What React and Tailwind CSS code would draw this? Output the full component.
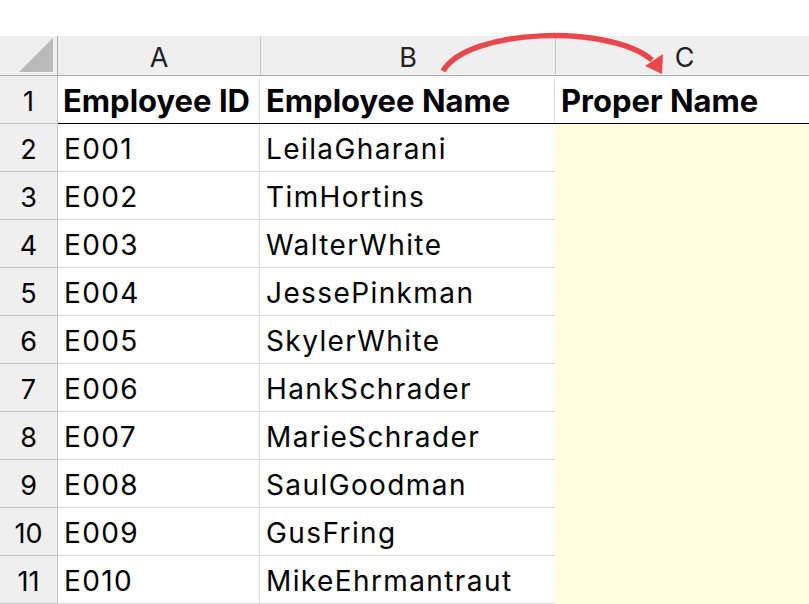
import React from "react";

const rows = [
  ["E001", "LeilaGharani"],
  ["E002", "TimHortins"],
  ["E003", "WalterWhite"],
  ["E004", "JessePinkman"],
  ["E005", "SkylerWhite"],
  ["E006", "HankSchrader"],
  ["E007", "MarieSchrader"],
  ["E008", "SaulGoodman"],
  ["E009", "GusFring"],
  ["E010", "MikeEhrmantraut"],
];

const App = () => {
  return (
    <div
      className="relative w-[809px] h-[604px] overflow-hidden bg-white text-black"
      style={{ fontFamily: "Inter, 'Noto Sans', sans-serif" }}
    >
      {/* gap above the sheet */}
      <div className="h-[36px]" />

      {/* column headers */}
      <div className="flex h-[40px] bg-[#efefef] border-b border-[#ababab] text-[27px] text-[#222]">
        <div className="w-[58px] shrink-0 border-r border-[#ababab] flex items-end justify-end pr-[4px] pb-[3px]">
          <div className="w-0 h-0 border-l-[34px] border-l-transparent border-b-[34px] border-b-[#b9b9b9]" />
        </div>
        <div className="w-[203px] shrink-0 border-r border-[#c6c6c6] flex items-center justify-center pt-[5px]">A</div>
        <div className="w-[295px] shrink-0 border-r border-[#c6c6c6] flex items-center justify-center pt-[5px]">B</div>
        <div className="flex-1 flex items-center justify-center pt-[5px] pl-[4px]">C</div>
      </div>

      {/* header row */}
      <div className="flex h-[48px]">
        <div className="w-[58px] shrink-0 bg-[#efefef] border-r border-b border-[#c6c6c6] flex items-center justify-center text-[27px] pt-[5px]">1</div>
        <div className="flex-1 flex border-b-[1.5px] border-black font-bold text-[31px] pt-[3px]">
          <div className="w-[202px] shrink-0 border-r border-[#dadada] flex items-center pl-[5px]">Employee ID</div>
          <div className="w-[295px] shrink-0 border-r border-[#dadada] flex items-center pl-[6px]">Employee Name</div>
          <div className="flex-1 flex items-center pl-[6px]">Proper Name</div>
        </div>
      </div>

      {/* data rows */}
      {rows.map(([id, name], i) => (
        <div key={id} className="flex h-[48px] text-[28px] tracking-[1.4px]">
          <div className="w-[58px] shrink-0 bg-[#efefef] border-r border-b border-[#c6c6c6] flex items-center justify-center text-[27px] tracking-normal pt-[5px]">
            {i + 2}
          </div>
          <div className="w-[202px] shrink-0 border-r border-b border-[#dadada] flex items-center pl-[6px] pt-[2px]">{id}</div>
          <div className="w-[295px] shrink-0 border-b border-[#dadada] flex items-center pl-[6px] pt-[2px]">{name}</div>
          <div className="flex-1 bg-[#ffffe0]" />
        </div>
      ))}

      {/* red arrow from B to C */}
      <svg className="absolute left-0 top-0 pointer-events-none" width="809" height="100">
        <path
          d="M443 71 C 468 28, 610 24, 652 60"
          fill="none"
          stroke="#e8474c"
          strokeWidth="5.5"
          strokeLinecap="butt"
        />
        <polygon points="645,66 663,54 662,74" fill="#e8474c" />
      </svg>
    </div>
  );
};

export default App;
